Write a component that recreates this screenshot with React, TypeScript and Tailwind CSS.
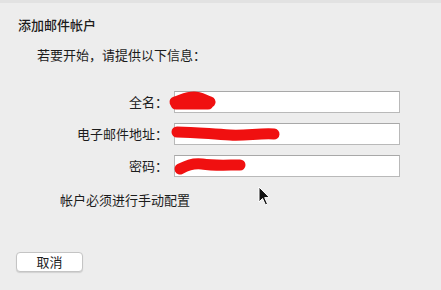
const FONT = { fontFamily: '"Noto Sans CJK SC", "Noto Sans", sans-serif' };

function Scribble({ d, w, h }: { d: string; w: number; h: number }) {
  return (
    <svg className="absolute left-[-5px] top-[-1px] pointer-events-none overflow-visible" width={w} height={h} viewBox={`0 0 ${w} ${h}`}>
      <path d={d} stroke="#f01010" strokeWidth={11} strokeLinecap="round" strokeLinejoin="round" fill="none" />
    </svg>
  );
}

const ROWS = [
  { label: "全名：", scribble: "M5 11 C12 9 16 6 24 6 C30 6 34 9 40 11 M6 13 L38 13", w: 60 },
  { label: "电子邮件地址：", scribble: "M7 9 C25 9 40 11 60 12 C75 13 90 10 104 11", w: 115 },
  { label: "密码：", scribble: "M10 14 C16 11 22 8 32 9 C44 11 58 10 70 10", w: 80 },
];

export default function App() {
  return (
    <div className="relative w-[441px] h-[290px] bg-[#ededed] text-[#1c1c1c] overflow-hidden" style={FONT}>
      <div className="h-[3px] bg-[#e2e2e2]" />
      <div className="pl-[18px] pt-[13px] text-[13px] leading-[18px] font-medium">添加邮件帐户</div>
      <div className="pl-[37px] mt-[12px] text-[13px] leading-[18px]">若要开始，请提供以下信息：</div>

      <div className="mt-[27px] grid grid-cols-[168px_226px] gap-x-[6px] gap-y-[10px] items-center">
        {ROWS.map((r) => (
          <div key={r.label} className="contents">
            <div className="text-right text-[13px] leading-[18px]">{r.label}</div>
            <div className="relative h-[22px] bg-white border border-[#b9b9b9] border-t-[#a8a8a8]">
              <Scribble d={r.scribble} w={r.w} h={20} />
            </div>
          </div>
        ))}
      </div>

      <div className="pl-[60px] mt-[14px] text-[13px] leading-[18px]">帐户必须进行手动配置</div>

      <div className="pl-[16px] mt-[39px]">
        <button
          type="button"
          className="w-[67px] h-[20px] rounded-[4px] bg-white border border-[#c4c4c4] shadow-[0_1px_1px_rgba(0,0,0,0.12)] text-[13px] leading-[18px] text-[#1c1c1c]"
        >
          取消
        </button>
      </div>

      <svg className="absolute left-[258px] top-[186px]" width="14" height="21" viewBox="0 0 14 21">
        <path d="M1 1 L1 16 L4.5 12.5 L7.5 19 L9.5 18 L6.7 11.6 L11.5 11.6 Z" fill="#111" stroke="#fff" strokeWidth="1" strokeLinejoin="round" />
      </svg>
    </div>
  );
}
